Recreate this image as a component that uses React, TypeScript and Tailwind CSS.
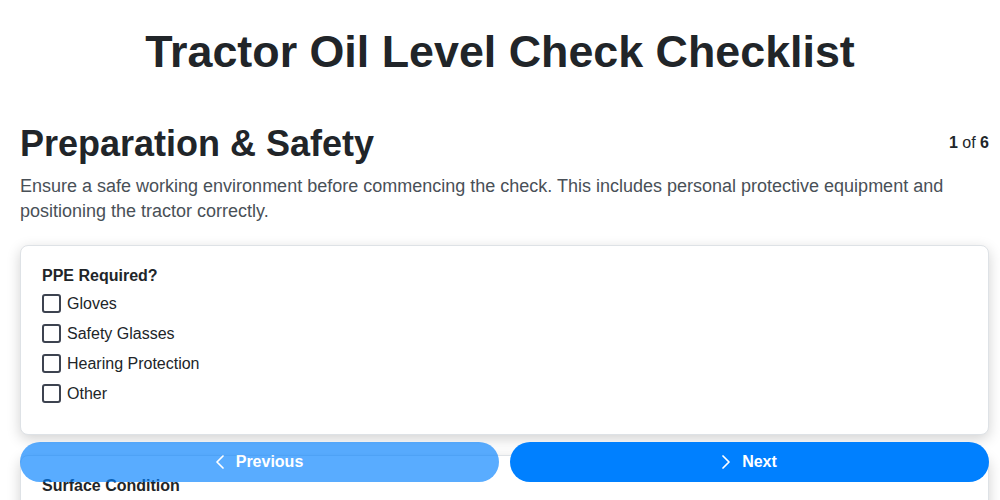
import { useState } from 'react';

type Section = {
  label: string;
  kind: 'check' | 'radio';
  options: string[];
};

const sections: Section[] = [
  { label: 'PPE Required?', kind: 'check', options: ['Gloves', 'Safety Glasses', 'Hearing Protection', 'Other'] },
  { label: 'Surface Condition', kind: 'radio', options: ['Level Ground', 'Slight Incline', 'Uneven'] },
];

function Chevron({ dir }: { dir: 'left' | 'right' }) {
  return (
    <svg width="8" height="14" viewBox="0 0 8 14" fill="none" stroke="currentColor" strokeWidth="1.7" strokeLinecap="round" strokeLinejoin="round">
      {dir === 'left' ? <path d="M7 1 1 7l6 6" /> : <path d="M1 1l6 6-6 6" />}
    </svg>
  );
}

function Card({ s }: { s: Section }) {
  const [checked, setChecked] = useState<Record<string, boolean>>({});
  return (
    <div className="rounded-lg border border-[#dee2e6] bg-white px-[21px] pt-5 pb-[25px] shadow-[0_4px_14px_rgba(0,0,0,0.18)]">
      <div className="text-[16px] font-bold leading-[19px]">{s.label}</div>
      <div className="mt-1 flex flex-col">
        {s.options.map((o) => (
          <label key={o} className="flex h-[30px] cursor-pointer items-center gap-[6px] text-[16px]">
            <span
              onClick={() => setChecked((c) => ({ ...c, [o]: !c[o] }))}
              className={
                s.kind === 'check'
                  ? 'h-[19px] w-[19px] rounded-[3px] border-2 border-[#3d4350] bg-white'
                  : 'h-[19px] w-[19px] rounded-full border-2 border-[#3d4350] bg-white'
              }
            />
            <span>{o}</span>
          </label>
        ))}
      </div>
    </div>
  );
}

export default function App() {
  return (
    <div className="min-h-screen bg-white font-['Liberation_Sans',Arial,sans-serif] text-[#212529]">
      <h1 className="pt-[25px] text-center text-[2.8rem] font-bold leading-[1.2]">Tractor Oil Level Check Checklist</h1>
      <main className="pl-5 pr-[11px] pb-[90px]">
        <div className="mt-[43px] flex items-center justify-between">
          <h2 className="text-[36px] font-bold leading-[1.2]">Preparation &amp; Safety</h2>
          <span className="text-[16px]">
            <b>1</b> of <b>6</b>
          </span>
        </div>
        <p className="mt-[9px] text-[18px] leading-[25px] text-[#495057]">
          Ensure a safe working environment before commencing the check. This includes personal protective equipment and positioning the tractor correctly.
        </p>
        <div className="mt-[21px] flex flex-col gap-5">
          {sections.map((s) => (
            <Card key={s.label} s={s} />
          ))}
        </div>
      </main>
      <div className="fixed bottom-[18px] left-5 right-[11px] z-10 flex gap-[11px]">
        <button className="flex h-10 flex-1 items-center justify-center gap-3 rounded-full bg-[#0080ff] text-[16px] font-bold text-white opacity-65">
          <Chevron dir="left" />
          Previous
        </button>
        <button className="flex h-10 flex-1 items-center justify-center gap-3 rounded-full bg-[#0080ff] text-[16px] font-bold text-white">
          <Chevron dir="right" />
          Next
        </button>
      </div>
    </div>
  );
}
